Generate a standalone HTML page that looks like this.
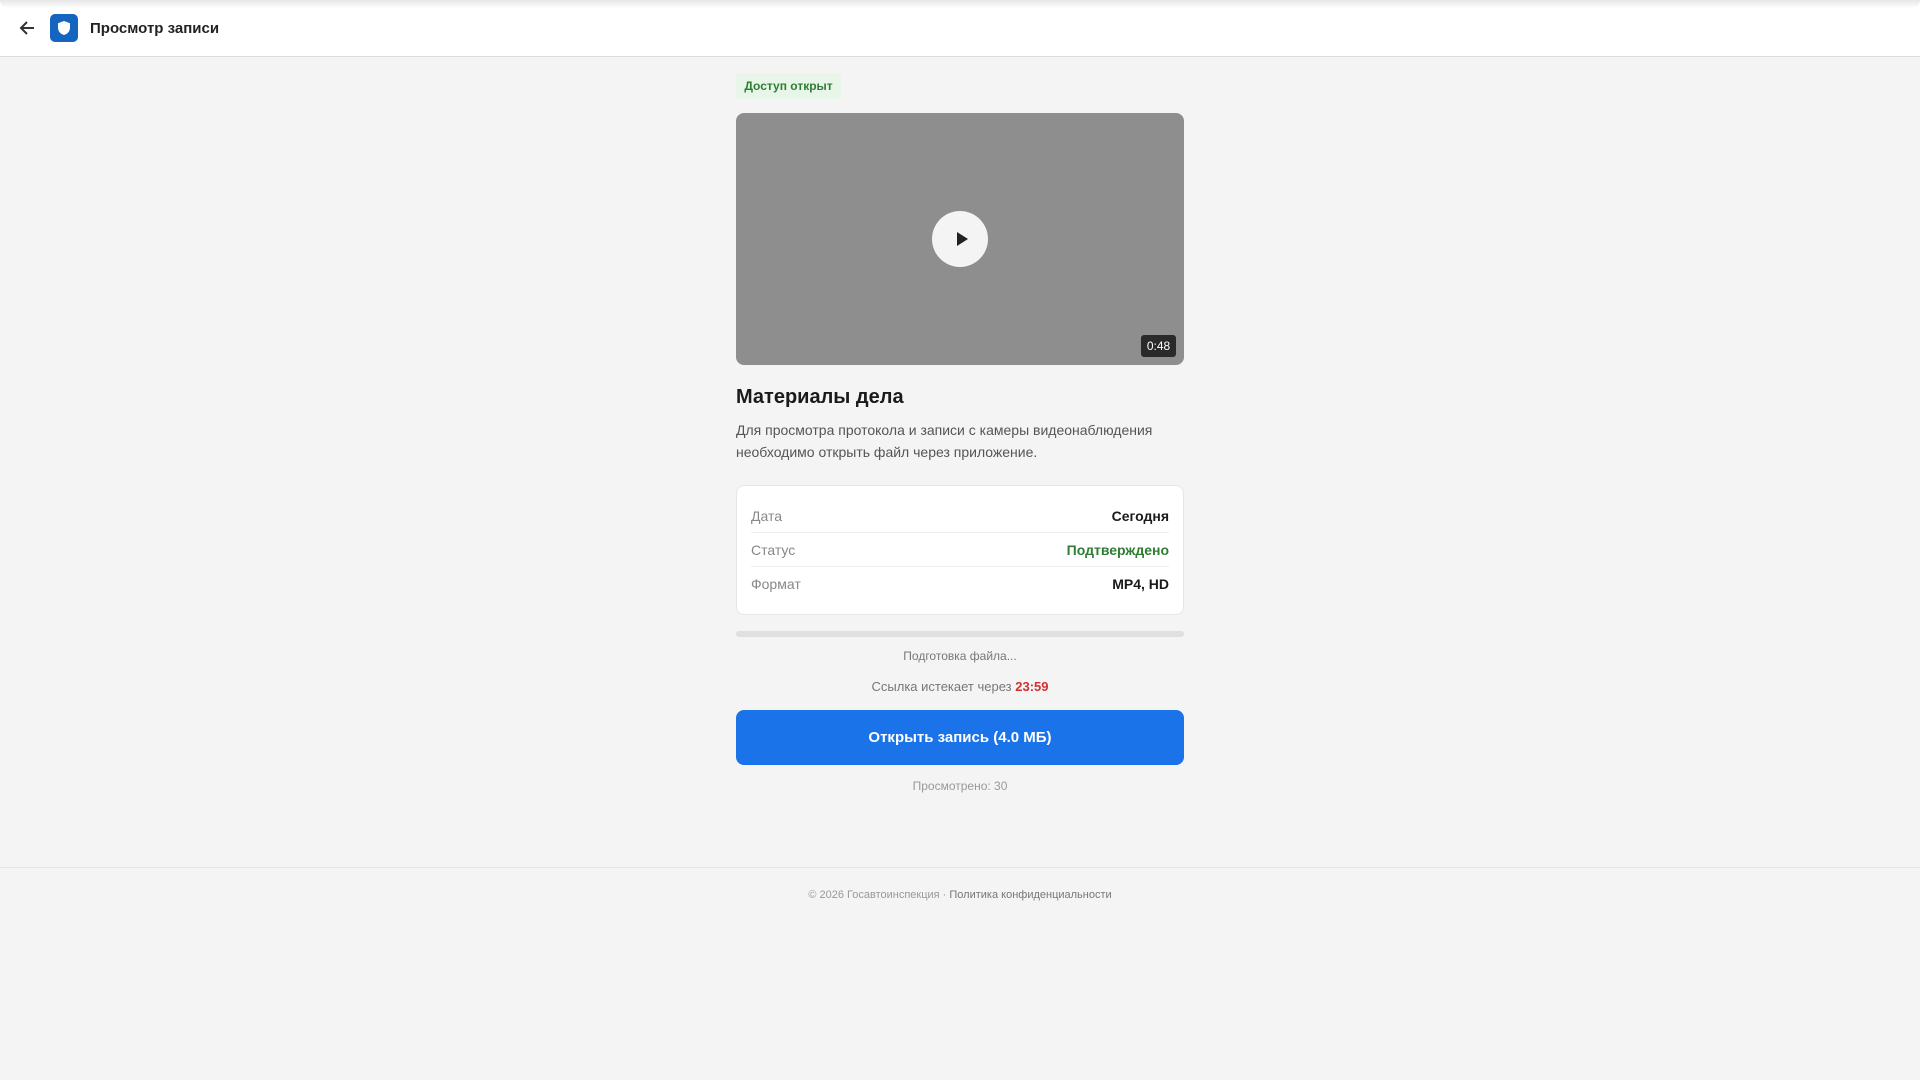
<!DOCTYPE html>
<html><head><meta charset="utf-8"><style>
*{box-sizing:border-box;margin:0;padding:0}
body{width:1920px;height:1080px;background:#f4f4f4;font-family:"Liberation Sans",Roboto,sans-serif;color:#1a1a1a;position:relative;overflow:hidden}
.hdr{position:absolute;left:0;top:0;width:1920px;height:57px;background:#fff;border-bottom:1px solid #dcdcdc}
.hdr .sh{position:absolute;left:0;right:0;top:0;height:8px;background:linear-gradient(#e6e6e6,#fff);border-radius:0 0 40px 40px}
.logo{position:absolute;left:50px;top:14px;width:28px;height:28px;background:#1565c0;border-radius:5px}
.ttl{position:absolute;left:90px;top:20px;font-size:15px;font-weight:bold;color:#222}
.col{position:absolute;left:736px;width:448px}
.badge{top:73px;width:105px;height:26px;background:#e8f5e9;color:#2e7d32;font-size:12px;font-weight:bold;border-radius:4px;text-align:center;line-height:26px}
.video{top:113px;height:252px;background:#8e8e8e;border-radius:8px}
.play{position:absolute;left:196px;top:98px;width:56px;height:56px;border-radius:50%;background:#f4f4f4}
.play:after{content:"";position:absolute;left:25px;top:21px;border-left:11px solid #222;border-top:7px solid transparent;border-bottom:7px solid transparent}
.dur{position:absolute;left:405px;top:222px;width:35px;height:22px;background:#2a2a2a;color:#fff;font-size:12px;line-height:22px;text-align:center;border-radius:3px}
h1{position:absolute;left:736px;top:386px;font-size:20px;font-weight:bold}
.desc{top:419px;font-size:14px;line-height:22px;color:#555}
.card{top:485px;height:130px;background:#fff;border:1px solid #e6e6e6;border-radius:8px;padding:13px 14px 0}
.row{display:flex;justify-content:space-between;height:34px;line-height:34px;font-size:14px;border-bottom:1px solid #eee}
.row:last-child{border:0}
.row span:first-child{color:#888}
.row span:last-child{font-weight:bold;color:#1a1a1a}
.bar{top:631px;height:6px;background:#e0e0e0;border-radius:3px}
.c{text-align:center}
.btn{top:710px;height:55px;background:#1a73e8;border-radius:8px;color:#fff;font-size:15px;font-weight:bold;line-height:55px;text-align:center}
.foot{position:absolute;left:0;top:867px;width:1920px;border-top:1px solid #e6e6e6}
</style></head><body>
<div class="hdr"><div class="sh"></div>
<svg style="position:absolute;left:18px;top:19px" width="18" height="18" viewBox="0 0 18 18"><path d="M16 9H3M9 3L3 9l6 6" fill="none" stroke="#333" stroke-width="2"/></svg>
<div class="logo"><svg width="28" height="28" viewBox="0 0 28 28"><path d="M14 7l6 2.3v4.5c0 3.6-2.6 6.3-6 7.2-3.4-.9-6-3.6-6-7.2V9.3z" fill="#fff"/></svg></div>
<div class="ttl">Просмотр записи</div></div>
<div class="col badge">Доступ открыт</div>
<div class="col video"><div class="play"></div><div class="dur">0:48</div></div>
<h1>Материалы дела</h1>
<div class="col desc">Для просмотра протокола и записи с камеры видеонаблюдения необходимо открыть файл через приложение.</div>
<div class="col card">
<div class="row"><span>Дата</span><span>Сегодня</span></div>
<div class="row"><span>Статус</span><span style="color:#2e7d32">Подтверждено</span></div>
<div class="row"><span>Формат</span><span>MP4, HD</span></div>
</div>
<div class="col bar"></div>
<div class="col c" style="top:649px;font-size:12px;color:#777">Подготовка файла...</div>
<div class="col c" style="top:679px;font-size:13px;color:#777">Ссылка истекает через <b style="color:#d32f2f">23:59</b></div>
<div class="col btn">Открыть запись (4.0 МБ)</div>
<div class="col c" style="top:779px;font-size:12px;color:#999">Просмотрено: 30</div>
<div class="foot"></div>
<div class="c" style="position:absolute;left:0;width:1920px;top:889px;font-size:11px;color:#999">© 2026 Госавтоинспекция · <span style="color:#777">Политика конфиденциальности</span></div>
</body></html>
